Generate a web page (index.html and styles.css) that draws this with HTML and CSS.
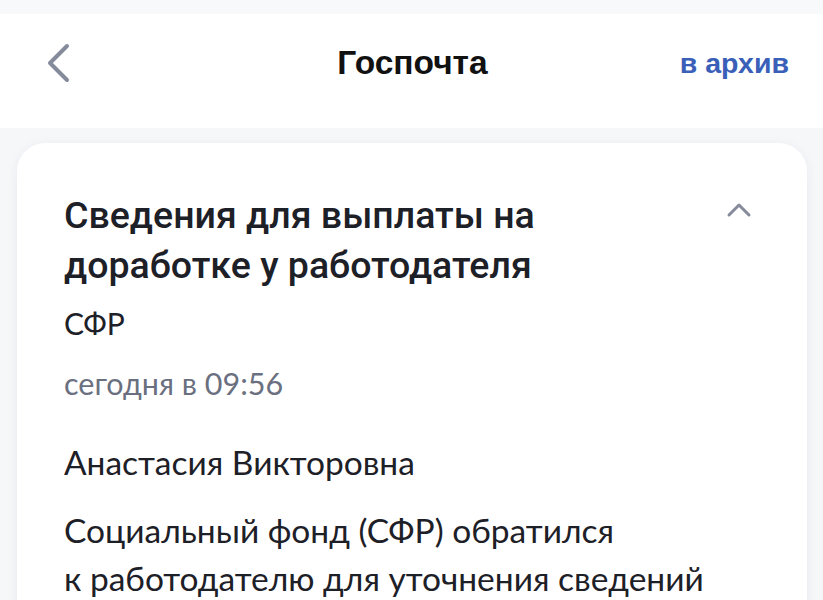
FILE: index.html
```html
<!DOCTYPE html>
<html lang="ru">
<head>
  <meta charset="UTF-8">
  <title>Госпочта</title>
  <link rel="stylesheet" href="styles.css">
</head>
<body>
  <!-- Top bar -->
  <div class="topbar">
    <button class="back-button" aria-label="Назад">
      <svg width="28" height="40" viewBox="0 0 28 40">
        <path d="M23 3 L6 20 L23 37" fill="none" stroke="#868b9c" stroke-width="4" stroke-linecap="round" stroke-linejoin="round"/>
      </svg>
    </button>
    <h1 class="topbar-title">Госпочта</h1>
    <a class="archive-link" href="#">в архив</a>
  </div>

  <!-- Message card -->
  <div class="content">
    <div class="message-card">
      <div class="message-head">
        <h2 class="message-title">Сведения для выплаты на доработке у работодателя</h2>
        <svg class="collapse-icon" width="26" height="16" viewBox="0 0 26 16">
          <path d="M3 13 L13 3 L23 13" fill="none" stroke="#868b9c" stroke-width="3" stroke-linecap="round" stroke-linejoin="round"/>
        </svg>
      </div>
      <div class="message-sender">СФР</div>
      <div class="message-date">сегодня в 09:56</div>
      <p class="message-text">Анастасия Викторовна</p>
      <p class="message-text">Социальный фонд (СФР) обратился<br>к работодателю для уточнения сведений</p>
    </div>
  </div>
</body>
</html>
```

FILE: styles.css
```css
body {
  margin: 0;
  background: #f6f7f9;
  font-family: Lato, "Noto Sans", sans-serif;
  color: #1d2027;
  overflow: hidden;
}
.topbar {
  display: grid;
  grid-template-columns: 1fr auto 1fr;
  align-items: center;
  box-sizing: border-box;
  height: 128px;
  padding: 0 34px 16px 44px;
  background: #fff;
  border-top: 14px solid #f8f9fb;
}
.back-button {
  justify-self: start;
  background: none;
  border: none;
  padding: 0;
  display: flex;
}
.topbar-title {
  margin: 0 8px 0 0;
  font-family: "Liberation Sans", Arial, sans-serif;
  font-weight: bold;
  font-size: 33.5px;
  color: #111;
}
.archive-link {
  justify-self: end;
  font-family: "Liberation Sans", Arial, sans-serif;
  font-weight: bold;
  font-size: 28.5px;
  color: #3a5fb8;
  text-decoration: none;
}
.content {
  padding: 15px 16px 0 17px;
}
.message-card {
  background: #fff;
  border-radius: 28px;
  box-shadow: 0 2px 12px rgba(30, 40, 80, 0.06);
  padding: 47px 47px 40px 47px;
  min-height: 600px;
}
.message-head {
  display: flex;
  justify-content: space-between;
  align-items: flex-start;
}
.message-title {
  margin: 0;
  font-family: Roboto, sans-serif;
  font-weight: 500;
  font-size: 37.5px;
  line-height: 50px;
  max-width: 560px;
}
.collapse-icon {
  margin: 12px 8px 0 0;
}
.message-sender {
  margin-top: 15px;
  font-size: 30px;
  line-height: 36px;
}
.message-date {
  margin-top: 24px;
  font-size: 30.5px;
  line-height: 36px;
  color: #6b7080;
}
.message-text {
  margin: 37px 0 0 0;
  font-size: 33.5px;
  line-height: 48px;
}
.message-text + .message-text {
  margin-top: 20px;
}
```
